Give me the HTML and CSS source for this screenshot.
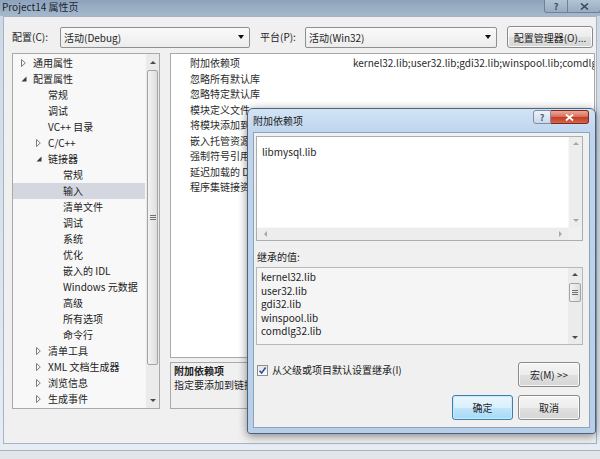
FILE: index.html
```html
<!DOCTYPE html>
<html lang="zh-CN">
<head>
<meta charset="utf-8">
<title>Project14 属性页</title>
<link rel="stylesheet" href="styles.css">
</head>
<body>
<div class="window">
  <div class="titlebar">
    <span class="title">Project14 属性页</span>
    <span class="cap-btn cap-help">?</span>
    <span class="cap-btn cap-close"><svg width="9" height="7" viewBox="0 0 9 7"><path d="M1 0.5 L8 6.5 M8 0.5 L1 6.5" stroke="#3b4a5c" stroke-width="1.6"/></svg></span>
  </div>
  <div class="client">
    <div class="toolbar">
      <span class="lbl lbl-config">配置(C):</span>
      <div class="combo combo-config"><span>活动(Debug)</span><i class="drop"></i></div>
      <span class="lbl lbl-platform">平台(P):</span>
      <div class="combo combo-platform"><span>活动(Win32)</span><i class="drop"></i></div>
      <div class="btn btn-mgr">配置管理器(O)...</div>
    </div>
    <div class="main">
      <div class="tree">
        <div class="tree-list">
          <div class="row l0"><span class="tw"><svg width="5" height="8" viewBox="0 0 5 8"><path d="M0.5 0.5 L4.3 4 L0.5 7.5 Z" fill="none" stroke="#7a7a7a"/></svg></span>通用属性</div>
          <div class="row l0"><span class="tw"><svg width="6" height="6" viewBox="0 0 6 6"><path d="M5.5 0.5 L5.5 5.5 L0.5 5.5 Z" fill="#3a3a3a"/></svg></span>配置属性</div>
          <div class="row l1"><span class="tw"></span>常规</div>
          <div class="row l1"><span class="tw"></span>调试</div>
          <div class="row l1"><span class="tw"></span>VC++ 目录</div>
          <div class="row l1"><span class="tw"><svg width="5" height="8" viewBox="0 0 5 8"><path d="M0.5 0.5 L4.3 4 L0.5 7.5 Z" fill="none" stroke="#7a7a7a"/></svg></span>C/C++</div>
          <div class="row l1"><span class="tw"><svg width="6" height="6" viewBox="0 0 6 6"><path d="M5.5 0.5 L5.5 5.5 L0.5 5.5 Z" fill="#3a3a3a"/></svg></span>链接器</div>
          <div class="row l2"><span class="tw"></span>常规</div>
          <div class="row l2 selected"><span class="tw"></span>输入</div>
          <div class="row l2"><span class="tw"></span>清单文件</div>
          <div class="row l2"><span class="tw"></span>调试</div>
          <div class="row l2"><span class="tw"></span>系统</div>
          <div class="row l2"><span class="tw"></span>优化</div>
          <div class="row l2"><span class="tw"></span>嵌入的 IDL</div>
          <div class="row l2"><span class="tw"></span>Windows 元数据</div>
          <div class="row l2"><span class="tw"></span>高级</div>
          <div class="row l2"><span class="tw"></span>所有选项</div>
          <div class="row l2"><span class="tw"></span>命令行</div>
          <div class="row l1"><span class="tw"><svg width="5" height="8" viewBox="0 0 5 8"><path d="M0.5 0.5 L4.3 4 L0.5 7.5 Z" fill="none" stroke="#7a7a7a"/></svg></span>清单工具</div>
          <div class="row l1"><span class="tw"><svg width="5" height="8" viewBox="0 0 5 8"><path d="M0.5 0.5 L4.3 4 L0.5 7.5 Z" fill="none" stroke="#7a7a7a"/></svg></span>XML 文档生成器</div>
          <div class="row l1"><span class="tw"><svg width="5" height="8" viewBox="0 0 5 8"><path d="M0.5 0.5 L4.3 4 L0.5 7.5 Z" fill="none" stroke="#7a7a7a"/></svg></span>浏览信息</div>
          <div class="row l1"><span class="tw"><svg width="5" height="8" viewBox="0 0 5 8"><path d="M0.5 0.5 L4.3 4 L0.5 7.5 Z" fill="none" stroke="#7a7a7a"/></svg></span>生成事件</div>
        </div>
        <div class="sb">
          <div class="sb-arrow"><i class="tri-up"></i></div>
          <div class="sb-thumb tree-thumb"><i class="grip"></i></div>
          <div class="sb-track"></div>
          <div class="sb-arrow"><i class="tri-down"></i></div>
        </div>
      </div>
      <div class="right">
        <div class="grid">
          <div class="grow"><span class="gname">附加依赖项</span><span class="gval">kernel32.lib;user32.lib;gdi32.lib;winspool.lib;comdlg32.lib;advapi32.lib;shell32.lib</span></div>
          <div class="grow"><span class="gname">忽略所有默认库</span><span class="gval"></span></div>
          <div class="grow"><span class="gname">忽略特定默认库</span><span class="gval"></span></div>
          <div class="grow"><span class="gname">模块定义文件</span><span class="gval"></span></div>
          <div class="grow"><span class="gname">将模块添加到程序集</span><span class="gval"></span></div>
          <div class="grow"><span class="gname">嵌入托管资源文件</span><span class="gval"></span></div>
          <div class="grow"><span class="gname">强制符号引用</span><span class="gval"></span></div>
          <div class="grow"><span class="gname">延迟加载的 DLL</span><span class="gval"></span></div>
          <div class="grow"><span class="gname">程序集链接资源</span><span class="gval"></span></div>
        </div>
        <div class="desc">
          <div class="desc-title">附加依赖项</div>
          <div class="desc-text">指定要添加到链接命令行的附加项。</div>
        </div>
      </div>
    </div>
  </div>
</div>

<div class="dialog">
  <div class="dtitle">
    <span class="dtext">附加依赖项</span>
    <span class="dbtn dhelp">?</span>
    <span class="dbtn dclose"><svg width="9" height="7" viewBox="0 0 9 7"><path d="M1 0.5 L8 6.5 M8 0.5 L1 6.5" stroke="#ffffff" stroke-width="1.8"/></svg></span>
  </div>
  <div class="dclient">
    <div class="edit">
      <div class="edit-text">libmysql.lib</div>
      <div class="esb-v">
        <div class="sb-arrow small"><i class="tri-up dis"></i></div>
        <div class="sb-track"></div>
        <div class="sb-arrow small"><i class="tri-down dis"></i></div>
      </div>
      <div class="esb-h">
        <div class="sb-harrow"><i class="tri-left dis"></i></div>
        <div class="sb-track"></div>
        <div class="sb-harrow"><i class="tri-right dis"></i></div>
      </div>
      <div class="esb-corner"></div>
    </div>
    <div class="inh-label">继承的值:</div>
    <div class="inh-list">
      <div class="inh-items">
        <div>kernel32.lib</div>
        <div>user32.lib</div>
        <div>gdi32.lib</div>
        <div>winspool.lib</div>
        <div>comdlg32.lib</div>
      </div>
      <div class="sb inh-sb">
        <div class="sb-arrow small"><i class="tri-up"></i></div>
        <div class="sb-thumb inh-thumb"><i class="grip"></i></div>
        <div class="sb-track"></div>
        <div class="sb-arrow small"><i class="tri-down"></i></div>
      </div>
    </div>
    <div class="opt-row">
      <div class="chk"><span class="box"><svg width="9" height="9" viewBox="0 0 9 9"><path d="M1.5 4.8 L3.6 7 L7.6 1.6" fill="none" stroke="#2f4f9a" stroke-width="1.6"/></svg></span>从父级或项目默认设置继承(I)</div>
      <div class="btn btn-macro">宏(M) &gt;&gt;</div>
    </div>
    <div class="ok-row">
      <div class="btn btn-ok">确定</div>
      <div class="btn btn-cancel">取消</div>
    </div>
  </div>
</div>
</body>
</html>
```

FILE: styles.css
```css
* { box-sizing: border-box; }
html, body { margin: 0; padding: 0; }
body {
  width: 600px;
  height: 459px;
  overflow: hidden;
  position: relative;
  background: #e3e6e9;
  font-family: "Noto Sans CJK SC", sans-serif;
  font-size: 10px;
  color: #1e1e1e;
}

/* ---------- main window ---------- */
.window {
  height: 451px;
  display: flex;
  flex-direction: column;
  padding: 0 3px 6px;
  background: linear-gradient(#cbd8e6, #e6edf4);
  border-bottom: 1px solid #a9b2bc;
}
.titlebar {
  height: 16px;
  margin: 0 -3px;
  padding-left: 2px;
  display: flex;
  align-items: flex-start;
  background: linear-gradient(#8ea3bb, #a6b8cc);
}
.title {
  line-height: 14px;
  color: #1a2633;
}
.cap-btn {
  height: 13px;
  display: flex;
  align-items: center;
  justify-content: center;
  border: 1px solid #6f8196;
  border-top: 0;
  background: linear-gradient(#b3c3d5, #97abc1);
  color: #3b4a5c;
  font-weight: bold;
  font-size: 9px;
}
.cap-help { margin-left: auto; width: 24px; border-radius: 0 0 0 3px; }
.cap-close { width: 33px; margin-right: -1px; border-left: 0; border-radius: 0 0 3px 0; }

.client {
  flex: 1;
  background: #f0f0f0;
  border: 1px solid #a8b3bf;
  padding: 9px 0 0 8px;
}

/* toolbar */
.toolbar {
  height: 22px;
  display: flex;
  align-items: center;
}
.lbl { line-height: 14px; }
.lbl-config { width: 48px; }
.lbl-platform { width: 45px; margin-left: 10px; }
.combo {
  height: 21px;
  display: flex;
  align-items: center;
  padding-left: 3px;
  border: 1px solid #8e8f8f;
  border-radius: 2px;
  background: linear-gradient(#fafafa, #ececec);
}
.combo-config { width: 190px; }
.combo-platform { width: 192px; }
.drop {
  margin-left: auto;
  margin-right: 5px;
  width: 0;
  height: 0;
  border-left: 3px solid transparent;
  border-right: 3px solid transparent;
  border-top: 4px solid #111;
}
.btn {
  display: flex;
  align-items: center;
  justify-content: center;
  border: 1px solid #8a8a8a;
  border-radius: 3px;
  background: linear-gradient(#f5f5f5 0%, #ececec 50%, #e0e0e0 51%, #d6d6d6 100%);
  box-shadow: inset 0 0 0 1px rgba(255,255,255,0.8);
}
.btn-mgr { width: 86px; height: 22px; margin-left: 10px; }

/* main area */
.main {
  margin-top: 5px;
  display: flex;
}
.tree {
  width: 148px;
  height: 356px;
  display: flex;
  border: 1px solid #a9a9a9;
  background: #f8f8f8;
}
.tree-list {
  width: 132px;
  padding-top: 1px;
}
.row {
  height: 16px;
  line-height: 16px;
  display: flex;
  align-items: center;
  white-space: nowrap;
  color: #222;
}
.row.l0 { padding-left: 8px; }
.row.l1 { padding-left: 23px; }
.row.l2 { padding-left: 38px; }
.row.selected { background: #d4d7df; }
.tw {
  width: 12px;
  flex: none;
  display: flex;
  align-items: center;
}

/* scrollbars */
.sb {
  width: 14px;
  display: flex;
  flex-direction: column;
  background: #ebebeb;
  border-left: 1px solid #f6f6f6;
}
.sb-arrow {
  height: 16px;
  flex: none;
  display: flex;
  align-items: center;
  justify-content: center;
}
.sb-arrow.small { height: 13px; }
.sb-track { flex: 1; }
.sb-thumb {
  flex: none;
  margin: 0 1px;
  border: 1px solid #a3a3a3;
  border-radius: 2px;
  background: linear-gradient(to right, #f3f3f3, #dedede);
  display: flex;
  align-items: center;
  justify-content: center;
}
.tree-thumb { height: 295px; }
.grip {
  width: 6px;
  height: 5px;
  background: repeating-linear-gradient(#707070 0 1px, transparent 1px 2px);
}
.tri-up, .tri-down, .tri-left, .tri-right {
  width: 0;
  height: 0;
  display: block;
}
.tri-up { border-left: 3px solid transparent; border-right: 3px solid transparent; border-bottom: 3px solid #4a4a4a; }
.tri-down { border-left: 3px solid transparent; border-right: 3px solid transparent; border-top: 3px solid #4a4a4a; }
.tri-left { border-top: 3px solid transparent; border-bottom: 3px solid transparent; border-right: 3px solid #4a4a4a; }
.tri-right { border-top: 3px solid transparent; border-bottom: 3px solid transparent; border-left: 3px solid #4a4a4a; }
.tri-up.dis { border-bottom-color: #a8a8a8; }
.tri-down.dis { border-top-color: #a8a8a8; }
.tri-left.dis { border-right-color: #a8a8a8; }
.tri-right.dis { border-left-color: #a8a8a8; }

/* property grid */
.right {
  width: 425px;
  margin-left: 10px;
  display: flex;
  flex-direction: column;
}
.grid {
  height: 305px;
  border: 1px solid #a9a9a9;
  background: #ffffff;
  padding-top: 1px;
  overflow: hidden;
}
.grow {
  height: 15.5px;
  display: flex;
  align-items: center;
  white-space: nowrap;
  color: #2a2a2a;
}
.gname {
  width: 179px;
  flex: none;
  padding-left: 19px;
}
.gval {
  padding-left: 3px;
  overflow: hidden;
}
.desc {
  height: 47px;
  margin-top: 4px;
  border: 1px solid #a9a9a9;
  padding: 1px 3px;
  line-height: 14px;
}
.desc-title { font-weight: bold; }

/* ---------- dialog ---------- */
.dialog {
  position: absolute;
  left: 247px;
  top: 108px;
  width: 349px;
  height: 326px;
  display: flex;
  flex-direction: column;
  border: 1px solid #50627a;
  border-radius: 6px 6px 3px 3px;
  background: linear-gradient(#d2e3f5 0, #bfd5ee 24px, #b7cfe9 100%);
  box-shadow: 0 2px 10px rgba(0,0,0,0.45);
}
.dtitle {
  height: 23px;
  flex: none;
  display: flex;
  align-items: flex-start;
  padding-left: 5px;
}
.dtext {
  line-height: 24px;
  color: #1a1a1a;
}
.dbtn {
  height: 14px;
  margin-top: 1px;
  display: flex;
  align-items: center;
  justify-content: center;
  font-size: 9px;
  font-weight: bold;
}
.dhelp {
  margin-left: auto;
  width: 18px;
  border: 1px solid #7b8ea5;
  border-radius: 3px 0 0 3px;
  background: linear-gradient(#eef4fb, #c9d8ea);
  color: #4b5b70;
}
.dclose {
  width: 38px;
  margin-right: 6px;
  border: 1px solid #7a2a1f;
  border-left: 0;
  border-radius: 0 3px 3px 0;
  background: linear-gradient(#e9a99a 0%, #d9735f 45%, #c43c24 55%, #d7664c 100%);
}
.dclient {
  flex: 1;
  margin: 0 5px 5px;
  border: 1px solid #8da3bb;
  background: #f0f0f0;
  padding: 3px 6px 0 2px;
  display: flex;
  flex-direction: column;
}
.edit {
  height: 105px;
  flex: none;
  border: 1px solid #abadb3;
  background: #ffffff;
  display: grid;
  grid-template-columns: 1fr 14px;
  grid-template-rows: 1fr 13px;
}
.edit-text {
  padding: 8px 5px 0;
  line-height: 14px;
  color: #222;
}
.esb-v {
  display: flex;
  flex-direction: column;
  background: #ededed;
  border-left: 1px solid #f8f8f8;
}
.esb-h {
  display: flex;
  background: #ededed;
  border-top: 1px solid #f8f8f8;
}
.sb-harrow {
  width: 16px;
  display: flex;
  align-items: center;
  justify-content: center;
}
.esb-corner { background: #f0f0f0; }
.inh-label {
  height: 26px;
  flex: none;
  padding: 6px 0 0 1px;
  line-height: 20px;
  color: #1a1a1a;
}
.inh-list {
  height: 78px;
  flex: none;
  display: flex;
  border: 1px solid #b5b7bc;
  background: #f5f5f5;
  overflow: hidden;
}
.inh-items {
  flex: 1;
  padding: 2px 0 0 4px;
  line-height: 13.5px;
  color: #222;
}
.inh-sb { border-left: 0; }
.inh-thumb { height: 19px; margin-top: 2px; }
.opt-row {
  height: 25px;
  margin-top: 17px;
  margin-right: 3px;
  flex: none;
  display: flex;
  align-items: flex-start;
}
.chk {
  display: flex;
  align-items: center;
  margin-top: 1px;
  line-height: 14px;
  color: #1a1a1a;
}
.box {
  width: 11px;
  height: 11px;
  margin: 0 4px 0 1px;
  border: 1px solid #8e8f8f;
  background: linear-gradient(#e6e6e6, #fbfbfb);
  display: flex;
  align-items: center;
  justify-content: center;
}
.btn-macro {
  margin-left: auto;
  width: 62px;
  height: 25px;
}
.ok-row {
  height: 25px;
  margin-top: 8px;
  margin-right: 3px;
  flex: none;
  display: flex;
  justify-content: flex-end;
  gap: 5px;
}
.btn-ok {
  width: 61px;
  border-color: #3c7fb1;
  background: linear-gradient(#eaf6fd 0%, #d9f0fc 50%, #bee6fd 51%, #a7d9f5 100%);
  box-shadow: inset 0 0 0 1px #c4ecfe;
}
.btn-cancel { width: 62px; }
```
